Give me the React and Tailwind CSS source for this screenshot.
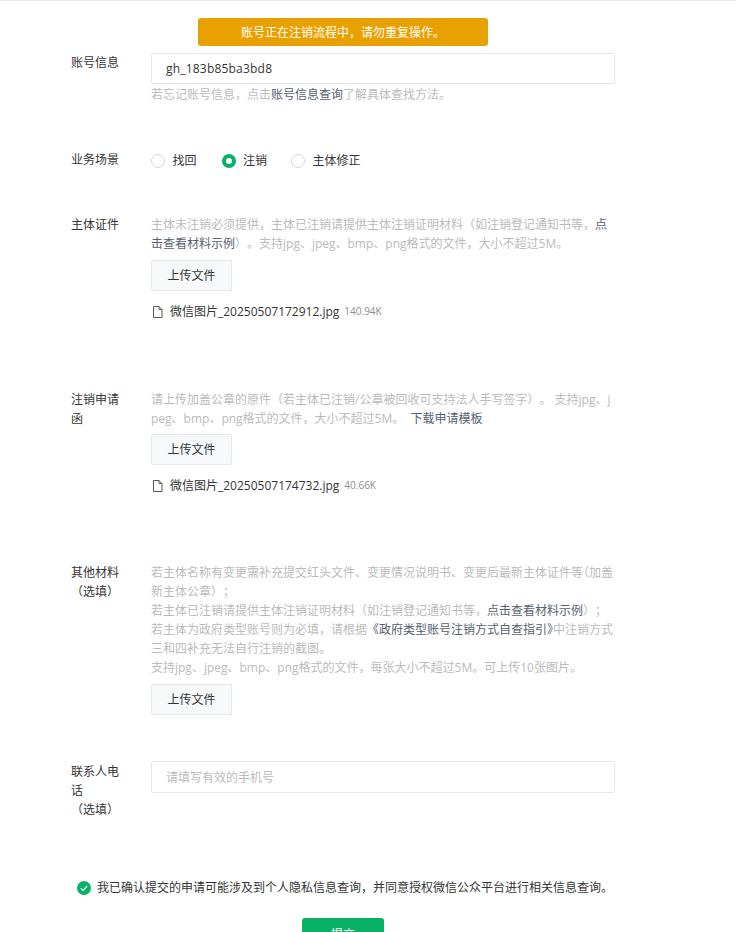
function Row({ label, className, labelClass, children }) {
  return (
    <div className={`flex ${className}`}>
      <div className={`w-[48px] mr-[32px] shrink-0 break-all text-[#353535] ${labelClass}`}>{label}</div>
      <div className="w-[464px] break-all">{children}</div>
    </div>
  );
}

function Upload({ className }) {
  return (
    <div className={`w-[81px] h-[31px] flex items-center justify-center rounded-[2px] border border-[#e4e8eb] bg-[#f6f8f9] text-[#353535] ${className}`}>
      上传文件
    </div>
  );
}

function FileItem({ name, size }) {
  return (
    <div className="mt-[11px] h-[19px] flex items-center text-[#353535]">
      <svg width="12" height="14" viewBox="0 0 12 14" fill="none" stroke="#5a5a5a" strokeWidth="1" className="ml-[1px] mr-[6px]">
        <path d="M1.5 1.5h5.5l3 3v8h-8.5z" />
        <path d="M7 1.5v3h3" />
      </svg>
      <span>{name}</span>
      <span className="ml-[5px] text-[10px] text-[#8d8d8d]">{size}</span>
    </div>
  );
}

function Radio({ checked, children, className }) {
  return (
    <div className={`flex items-center ${className}`}>
      {checked ? (
        <span className="w-[14px] h-[14px] rounded-full border-[4px] border-[#07b265] bg-white" />
      ) : (
        <span className="w-[14px] h-[14px] rounded-full border border-[#d4d5d7] bg-white" />
      )}
      <span className="ml-[7.5px] text-[#353535]">{children}</span>
    </div>
  );
}

const Link = ({ children, className }) => <span className={`text-[#56616f] ${className}`}>{children}</span>;
const Halt = ({ children }) => <span className="[font-feature-settings:'halt']">{children}</span>;

export default function App() {
  return (
    <div className="relative h-[932px] w-[736px] overflow-hidden bg-white border-t border-[#e7e7eb] text-[12px] leading-[19px] text-[#bbbbbb] [text-spacing-trim:space-all] font-['Open_Sans','Noto_Sans_CJK_SC',sans-serif]">
      <div className="absolute left-[198px] top-[17px] w-[290px] h-[28px] flex items-center justify-center rounded-[3px] bg-[#e9a100] text-white">
        账号正在注销流程中，请勿重复操作。
      </div>

      <div className="pl-[71px] pt-[52px]">
        <Row label="账号信息">
          <div className="h-[31px] flex items-center px-[14px] rounded-[2px] border border-[#e4e8eb] text-[#353535] tracking-[0.2px]">
            gh_183b85ba3bd8
          </div>
          <div className="mt-[1px]">
            若忘记账号信息，点击<Link>账号信息查询</Link>了解具体查找方法。
          </div>
        </Row>

        <Row label="业务场景" className="mt-[46px]">
          <div className="flex h-[19px] mt-[1px] mb-[1px]">
            <Radio>找回</Radio>
            <Radio checked className="ml-[25px]">注销</Radio>
            <Radio className="ml-[24px]">主体修正</Radio>
          </div>
        </Row>

        <Row label="主体证件" className="mt-[44px]">
          <div>
            主体未注销必须提供，主体已注销请提供主体注销证明材料（如注销登记通知书等，<Link>点击查看材料示例</Link>）。支持jpg、jpeg、bmp、png格式的文件，大小不超过5M。
          </div>
          <Upload className="mt-[7px]" />
          <FileItem name="微信图片_20250507172912.jpg" size="140.94K" />
        </Row>

        <Row label="注销申请函" className="mt-[69px]">
          <div>
            请上传加盖公章的原件（若主体已注销/公章被回收可支持法人手写签字）。 支持jpg、jpeg、bmp、png格式的文件，大小不超过5M。 <Link className="ml-[3px]">下载申请模板</Link>
          </div>
          <Upload className="mt-[6px]" />
          <FileItem name="微信图片_20250507174732.jpg" size="40.66K" />
        </Row>

        <Row
          label={
            <>
              其他材料
              <div className="whitespace-nowrap">（选填）</div>
            </>
          }
          className="mt-[68px]"
        >
          <div>若主体名称有变更需补充提交红头文件、变更情况说明书、变更后最新主体证件等<Halt>（</Halt>加盖新主体公章）；</div>
          <div>若主体已注销请提供主体注销证明材料（如注销登记通知书等，<Link>点击查看材料示例</Link>）；</div>
          <div>若主体为政府类型账号则为必填，请根据<Link>《政府类型账号注销方式自查指引<Halt>》</Halt></Link>中注销方式三和四补充无法自行注销的截图。</div>
          <div>支持jpg、jpeg、bmp、png格式的文件，每张大小不超过5M。可上传10张图片。</div>
          <Upload className="mt-[7px]" />
        </Row>

        <Row
          label={
            <>
              联系人电话
              <div className="whitespace-nowrap">（选填）</div>
            </>
          }
          labelClass="mt-[1px]"
          className="mt-[46px]"
        >
          <div className="h-[32px] flex items-center px-[14px] rounded-[2px] border border-[#e4e8eb] text-[#bbbbbb]">
            请填写有效的手机号
          </div>
        </Row>

        <div className="mt-[59px] ml-[6px] flex items-center text-[#353535]">
          <svg width="14" height="14" viewBox="0 0 14 14" className="mr-[6px]">
            <circle cx="7" cy="7" r="7" fill="#07b265" />
            <path d="M3.8 7.2l2.2 2.2 4.2-4.4" fill="none" stroke="#fff" strokeWidth="1.1" />
          </svg>
          我已确认提交的申请可能涉及到个人隐私信息查询，并同意授权微信公众平台进行相关信息查询。
        </div>
      </div>

      <div className="absolute left-[302px] top-[917px] w-[82px] h-[32px] flex items-center justify-center rounded-[3px] bg-[#07b265] text-white">
        提交
      </div>
    </div>
  );
}
